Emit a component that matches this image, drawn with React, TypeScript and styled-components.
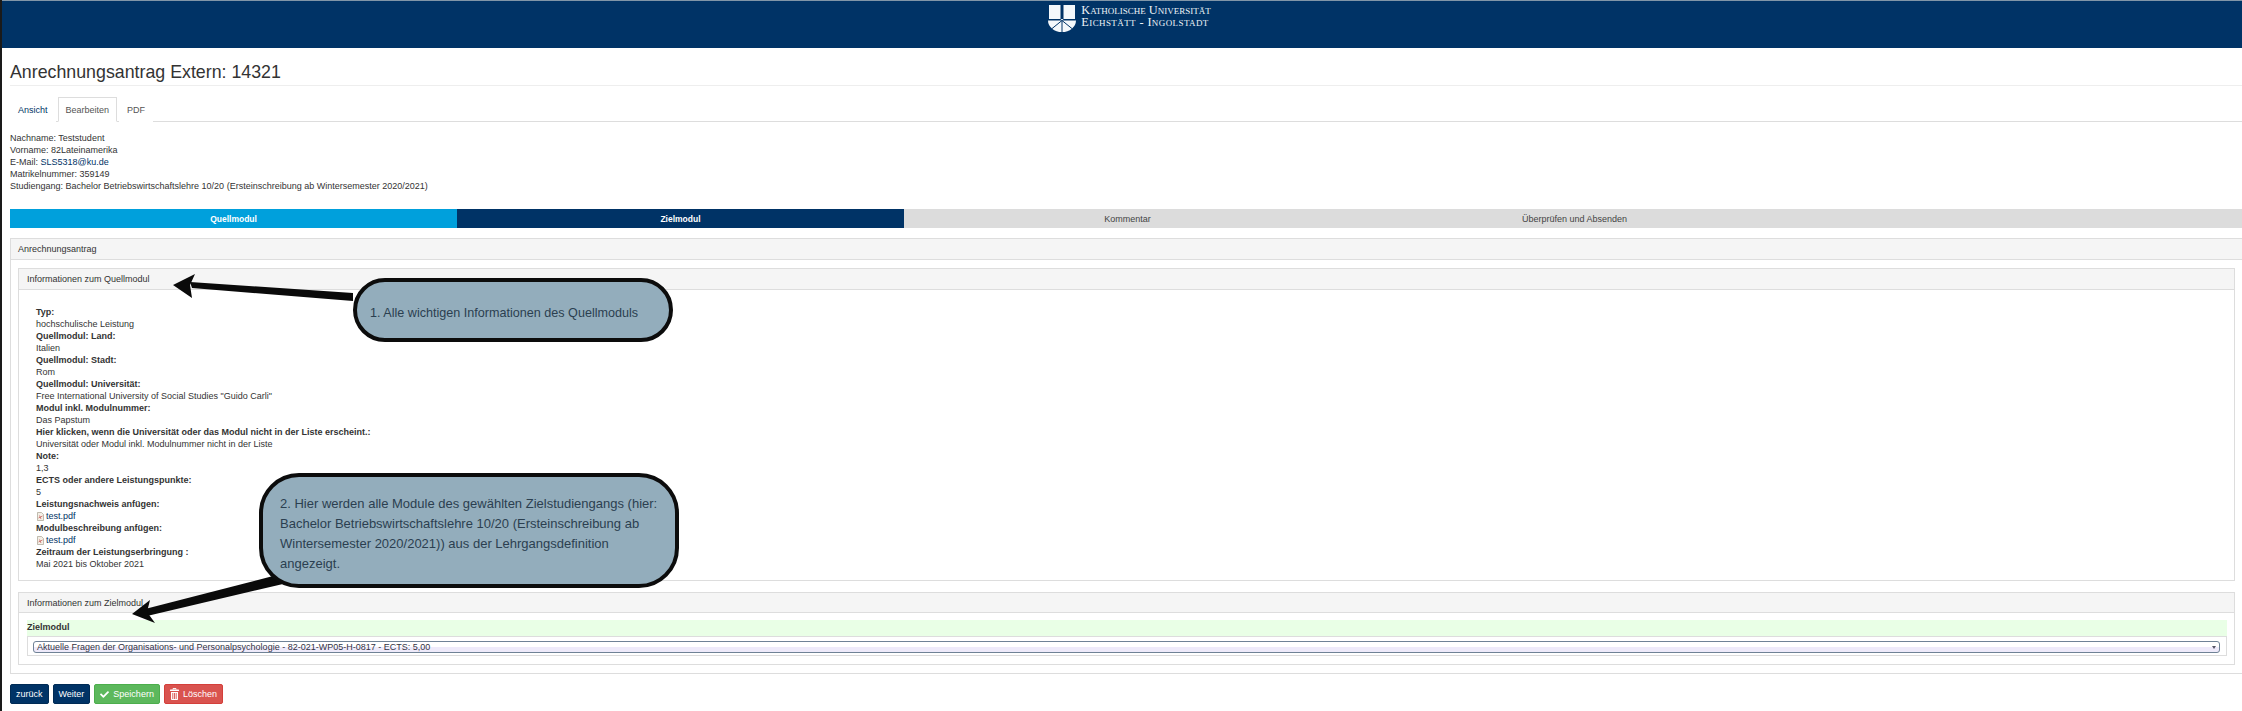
import React from 'react';
import styled, {createGlobalStyle} from 'styled-components';
import {FaCheck} from 'react-icons/fa';

const GlobalStyle = createGlobalStyle`
    html, body {
        margin: 0;
        padding: 0;
        height: 711px;
        overflow: hidden;
        background: #fff;
    }
    body {
        font-family: 'Liberation Sans', Arial, sans-serif;
        font-size: 9px;
        line-height: 12px;
        color: #333;
    }
`;

const Page = styled.div`
    position: relative;
    width: 2242px;
    height: 711px;
    overflow: hidden;
    border-left: 2px solid #1a1a1a;
    box-sizing: border-box;
`;

const Header = styled.header`
    box-sizing: border-box;
    height: 48px;
    background: #003366;
    border-top: 1px solid #8196a8;
    display: flex;
    justify-content: center;
    align-items: flex-start;
    gap: 5px;
    padding: 3px 0 0 15px;
`;

const LogoText = styled.div`
    font-family: 'Liberation Serif', serif;
    font-variant: small-caps;
    font-size: 12.300px;
    line-height: 12px;
    color: #eef3f7;
`;

const LogoLine = styled.div<{$spacing: number}>`
    letter-spacing: ${p => p.$spacing}px;
    white-space: nowrap;
`;

const Content = styled.main`
    padding: 0 0 0 8px;
`;

const Title = styled.h1`
    margin: 13px 0 0;
    padding-bottom: 2px;
    height: 22px;
    font-size: 17.800px;
    font-weight: 400;
    line-height: 22px;
    color: #333;
    border-bottom: 1px solid #eee;
`;

const Tabs = styled.nav`
    display: flex;
    height: 24px;
    margin-top: 11px;
    border-bottom: 1px solid #ddd;
`;

const Tab = styled.a<{$active?: boolean; $muted?: boolean}>`
    box-sizing: border-box;
    height: 25px;
    padding: 0 7px;
    margin-right: 2px;
    display: flex;
    align-items: center;
    font-size: 9px;
    color: ${p => (p.$active || p.$muted ? '#555' : '#003366')};
    background: #fff;
    border: 1px solid ${p => (p.$active ? '#ddd' : 'transparent')};
    border-bottom-color: ${p => (p.$active ? '#fff' : 'transparent')};
`;

const Student = styled.div`
    margin-top: 10px;
`;

const Line = styled.div`
    height: 12px;
`;

const Link = styled.a`
    color: #003366;
`;

const Wizard = styled.div`
    display: grid;
    grid-template-columns: repeat(5, 447px);
    height: 19px;
    margin-top: 17px;
`;

const Step = styled.div<{$bg: string; $fg: string; $bold?: boolean}>`
    display: flex;
    align-items: center;
    justify-content: center;
    background: ${p => p.$bg};
    color: ${p => p.$fg};
    font-size: ${p => (p.$bold ? 8.5 : 9)}px;
    font-weight: ${p => (p.$bold ? 700 : 400)};
`;

const Panel = styled.section`
    box-sizing: border-box;
    border: 1px solid #ddd;
    background: #fff;
`;

const OuterPanel = styled(Panel)`
    margin-top: 10px;
    width: 2245px;
    height: 436px;
`;

const PanelHeading = styled.div<{$inset?: number; $height?: number}>`
    box-sizing: border-box;
    height: ${p => p.$height ?? 21}px;
    padding: 0 ${p => p.$inset ?? 8}px;
    display: flex;
    align-items: center;
    background: #f5f5f5;
    border-bottom: 1px solid #ddd;
`;

const OuterBody = styled.div`
    padding: 8px 0 0 7px;
    width: 2217px;
`;

const SourcePanel = styled(Panel)`
    height: 313px;
`;

const TargetPanel = styled(Panel)`
    height: 73px;
    margin-top: 11px;
`;

const SourceBody = styled.div`
    padding: 16px 0 0 17px;
`;

const Label = styled.div`
    height: 12px;
    font-weight: 700;
`;

const Value = styled.div`
    height: 12px;
`;

const FileValue = styled(Value)`
    display: flex;
    align-items: center;
    gap: 2px;
    padding-left: 1px;
`;

const TargetBody = styled.div`
    padding: 7px 7px 0 8px;
`;

const FieldLabel = styled.div`
    height: 16px;
    padding-top: 1px;
    box-sizing: border-box;
    font-weight: 700;
    background: #e9ffe6;
`;

const SelectWrap = styled.div`
    box-sizing: border-box;
    height: 20px;
    padding: 4px 6px 3px 5px;
    border: 1px solid #ddd;
`;

const SelectBox = styled.div`
    box-sizing: border-box;
    height: 12px;
    padding: 0 3px;
    display: flex;
    align-items: center;
    justify-content: space-between;
    border: 1px solid #6f8296;
    border-radius: 3px;
    font-size: 9px;
    color: #334;
    background: linear-gradient(#fff 0%, #fff 45%, #eeeafa 55%, #eeeafa 100%);
`;

const Caret = styled.span`
    width: 0;
    height: 0;
    border-left: 2px solid transparent;
    border-right: 2px solid transparent;
    border-top: 3px solid #556;
`;

const Actions = styled.div`
    display: flex;
    gap: 4px;
    margin-top: 10px;
`;

const Button = styled.button<{$bg: string; $border: string}>`
    box-sizing: border-box;
    height: 20px;
    padding: 0 5px;
    display: flex;
    align-items: center;
    gap: 4px;
    font-family: inherit;
    font-size: 9px;
    color: #fff;
    background: ${p => p.$bg};
    border: 1px solid ${p => p.$border};
    border-radius: 2px;
`;

const Callout = styled.div<{$left: number; $top: number; $width: number; $height: number}>`
    position: absolute;
    box-sizing: border-box;
    left: ${p => p.$left}px;
    top: ${p => p.$top}px;
    width: ${p => p.$width}px;
    height: ${p => p.$height}px;
    border: 4px solid #0c0c0c;
    background: #93adbc;
    color: #2b3f50;
    display: flex;
    align-items: center;
`;

const CalloutOne = styled(Callout)`
    border-radius: 32px;
    padding: 6px 0 0 13px;
    font-size: 12.600px;
    line-height: 20px;
`;

const CalloutTwo = styled(Callout)`
    border-radius: 40px;
    padding: 6px 0 0 17px;
    font-size: 13px;
    line-height: 20px;
`;

const ArrowLayer = styled.svg`
    position: absolute;
    left: -2px;
    top: 0;
    pointer-events: none;
`;

const Logo = () => (
    <svg width="28" height="27" viewBox="0 0 28 27" style={{marginTop: 1}}>
        <path d="M1 0h11.500v14L14 15.500 15.500 14V0H27v14H1z" fill="#f4f8fb" />
        <path d="M0 15.500h28A14 11.500 0 0 1 0 15.500Z" fill="#f4f8fb" />
        <path
            d="M14 15.500L3.500 24M14 15.500L24.500 24M14 15.500V27"
            stroke="#003366"
            strokeWidth="1"
            fill="none"
        />
    </svg>
);

const FileIcon = () => (
    <svg width="7" height="9" viewBox="0 0 7 9">
        <path d="M.5.5h4l2 2v6h-6z" fill="#f4efe6" stroke="#a8a090" strokeWidth=".7" />
        <path d="M1.500 6l4-2M2.500 3.500l1.500 3.500" stroke="#c0504a" strokeWidth=".7" />
    </svg>
);

const TrashIcon = () => (
    <svg width="9" height="12" viewBox="0 0 9 12">
        <path d="M3 1.500V.6h3v.9" fill="none" stroke="#fff" strokeWidth="1" />
        <rect x="0" y="1.500" width="9" height="1.600" rx=".5" fill="#fff" />
        <path d="M1 4h7v7.200a.8.8 0 0 1-.8.8H1.800a.8.8 0 0 1-.8-.8z" fill="#fff" />
        <path d="M2.800 5v6M4.500 5v6M6.200 5v6" stroke="#d9534f" strokeWidth=".9" />
    </svg>
);

const sourceFields: Array<[string, string, boolean?]> = [
    ['Typ:', 'hochschulische Leistung'],
    ['Quellmodul: Land:', 'Italien'],
    ['Quellmodul: Stadt:', 'Rom'],
    ['Quellmodul: Universität:', 'Free International University of Social Studies "Guido Carli"'],
    ['Modul inkl. Modulnummer:', 'Das Papstum'],
    [
        'Hier klicken, wenn die Universität oder das Modul nicht in der Liste erscheint.:',
        'Universität oder Modul inkl. Modulnummer nicht in der Liste',
    ],
    ['Note:', '1,3'],
    ['ECTS oder andere Leistungspunkte:', '5'],
    ['Leistungsnachweis anfügen:', 'test.pdf', true],
    ['Modulbeschreibung anfügen:', 'test.pdf', true],
    ['Zeitraum der Leistungserbringung :', 'Mai 2021 bis Oktober 2021'],
];

export default function App() {
    return (
        <Page>
            <GlobalStyle />
            <Header>
                <Logo />
                <LogoText>
                    <LogoLine $spacing={0}>Katholische Universität</LogoLine>
                    <LogoLine $spacing={0.4}>Eichstätt - Ingolstadt</LogoLine>
                </LogoText>
            </Header>
            <Content>
                <Title>Anrechnungsantrag Extern: 14321</Title>
                <Tabs>
                    <Tab>Ansicht</Tab>
                    <Tab $active>Bearbeiten</Tab>
                    <Tab $muted>PDF</Tab>
                </Tabs>
                <Student>
                    <Line>Nachname: Teststudent</Line>
                    <Line>Vorname: 82Lateinamerika</Line>
                    <Line>
                        E-Mail: <Link>SLS5318@ku.de</Link>
                    </Line>
                    <Line>Matrikelnummer: 359149</Line>
                    <Line>
                        Studiengang: Bachelor Betriebswirtschaftslehre 10/20 (Ersteinschreibung ab
                        Wintersemester 2020/2021)
                    </Line>
                </Student>
                <Wizard>
                    <Step $bg="#00a0dc" $fg="#fff" $bold>
                        Quellmodul
                    </Step>
                    <Step $bg="#003366" $fg="#fff" $bold>
                        Zielmodul
                    </Step>
                    <Step $bg="#dcdcdc" $fg="#444">
                        Kommentar
                    </Step>
                    <Step $bg="#dcdcdc" $fg="#444">
                        Überprüfen und Absenden
                    </Step>
                    <Step $bg="#dcdcdc" $fg="#444" />
                </Wizard>
                <OuterPanel>
                    <PanelHeading $inset={7}>Anrechnungsantrag</PanelHeading>
                    <OuterBody>
                        <SourcePanel>
                            <PanelHeading>Informationen zum Quellmodul</PanelHeading>
                            <SourceBody>
                                {sourceFields.map(([label, value, isFile]) => (
                                    <React.Fragment key={label}>
                                        <Label>{label}</Label>
                                        {isFile ? (
                                            <FileValue>
                                                <FileIcon />
                                                <Link>{value}</Link>
                                            </FileValue>
                                        ) : (
                                            <Value>{value}</Value>
                                        )}
                                    </React.Fragment>
                                ))}
                            </SourceBody>
                        </SourcePanel>
                        <TargetPanel>
                            <PanelHeading $height={20}>Informationen zum Zielmodul</PanelHeading>
                            <TargetBody>
                                <FieldLabel>Zielmodul</FieldLabel>
                                <SelectWrap>
                                    <SelectBox>
                                        Aktuelle Fragen der Organisations- und Personalpsychologie -
                                        82-021-WP05-H-0817 - ECTS: 5,00
                                        <Caret />
                                    </SelectBox>
                                </SelectWrap>
                            </TargetBody>
                        </TargetPanel>
                    </OuterBody>
                </OuterPanel>
                <Actions>
                    <Button $bg="#003366" $border="#002b55">zurück</Button>
                    <Button $bg="#003366" $border="#002b55">Weiter</Button>
                    <Button $bg="#5cb85c" $border="#4cae4c">
                        <FaCheck size={9} />
                        Speichern
                    </Button>
                    <Button $bg="#d9534f" $border="#d43f3a">
                        <TrashIcon />
                        Löschen
                    </Button>
                </Actions>
            </Content>
            <ArrowLayer width="700" height="711">
                <path d="M353 293 L190 282 L192 288 L353 301Z" fill="#0a0a0a" />
                <path d="M173 285 L195 274 L190 285 L192 298Z" fill="#0a0a0a" />
                <path d="M277 575 L145 609 L147 616 L283 584Z" fill="#0a0a0a" />
                <path d="M132 614 L150 600 L147 612 L155 623Z" fill="#0a0a0a" />
            </ArrowLayer>
            <CalloutOne $left={351} $top={278} $width={320} $height={64}>
                1. Alle wichtigen Informationen des Quellmoduls
            </CalloutOne>
            <CalloutTwo $left={257} $top={473} $width={420} $height={115}>
                2. Hier werden alle Module des gewählten Zielstudiengangs (hier:
                <br />
                Bachelor Betriebswirtschaftslehre 10/20 (Ersteinschreibung ab
                <br />
                Wintersemester 2020/2021)) aus der Lehrgangsdefinition
                <br />
                angezeigt.
            </CalloutTwo>
        </Page>
    );
}
